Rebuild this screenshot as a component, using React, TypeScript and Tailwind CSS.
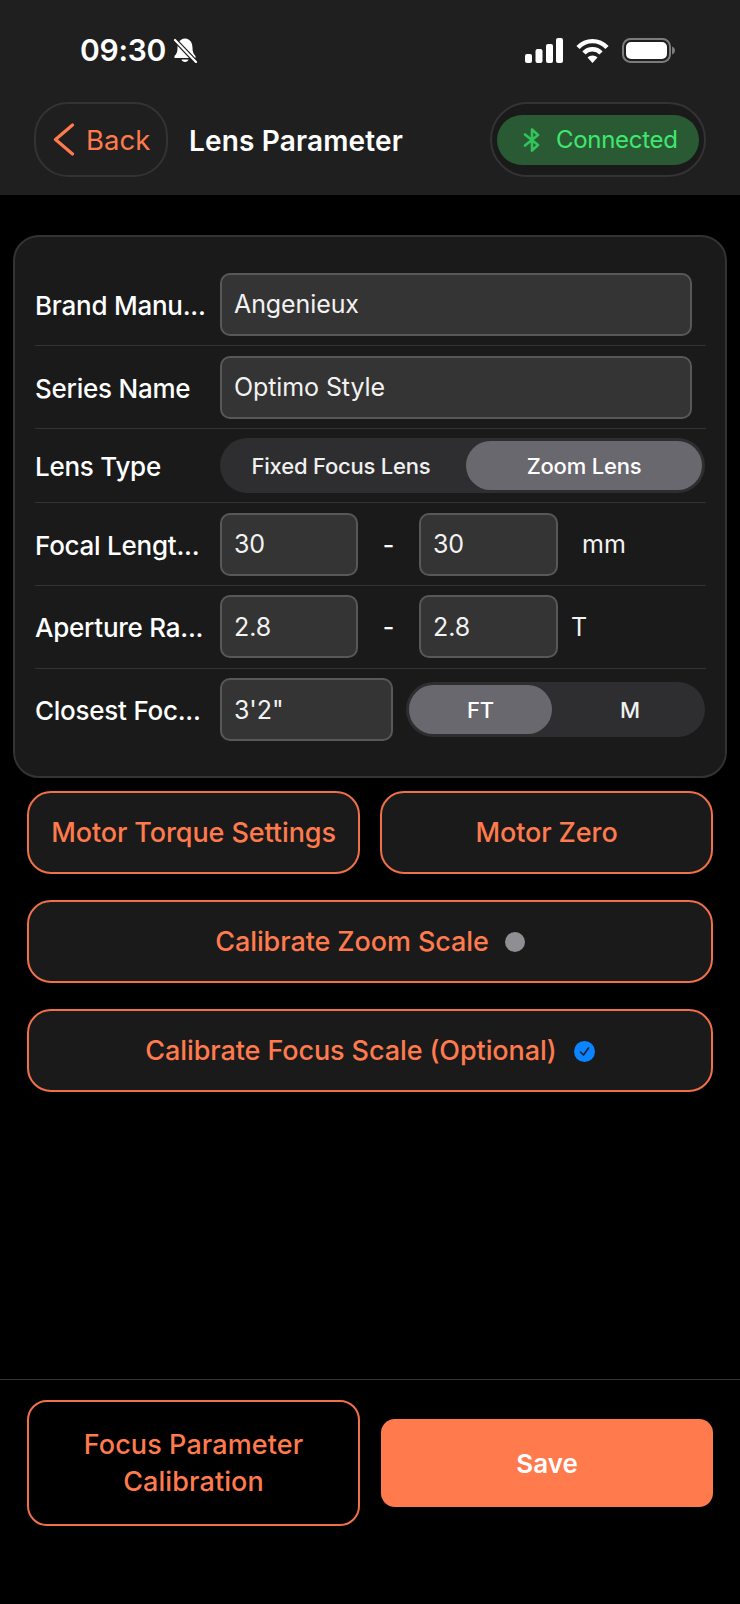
const font = { fontFamily: "Inter, 'Liberation Sans', sans-serif" };

function Field({ value, className }: { value: string; className: string }) {
  return (
    <div className={`flex h-[63px] items-center rounded-[10px] border-2 border-[#585858] bg-[#343434] pl-[12px] pt-[2px] text-[25px] tracking-[-0.1px] text-[#f2f2f2] ${className}`}>
      {value}
    </div>
  );
}

function Row({ label, children, last, lift = "" }: { label: string; children: React.ReactNode; last?: boolean; lift?: string }) {
  return (
    <div className={`flex h-[83px] items-center ${lift} ${last ? "" : "border-b border-[#333333]"}`}>
      <div className="w-[185px] shrink-0 pt-[2px] text-[26px] font-medium tracking-[-0.25px] text-white">{label}</div>
      {children}
    </div>
  );
}

function Segment({ options, active, className, thumb, rest }: { options: string[]; active: number; className: string; thumb: string; rest: string }) {
  return (
    <div className={`flex h-[55px] items-center rounded-full bg-[#2e2e30] p-[3px] ${className}`}>
      {options.map((o, i) =>
        i === active ? (
          <div key={o} className={`flex h-[49px] items-center justify-center rounded-full bg-[#69686e] pt-[1px] text-[22px] font-medium tracking-[-0.2px] text-white ${thumb}`}>
            {o}
          </div>
        ) : (
          <div key={o} className={`flex h-[49px] flex-1 items-center justify-center pt-[1px] text-[22px] font-medium tracking-[-0.2px] text-[#f0f0f0] ${rest}`}>
            {o}
          </div>
        )
      )}
    </div>
  );
}

function OutlineButton({ children, className }: { children: React.ReactNode; className: string }) {
  return (
    <div className={`flex items-center justify-center rounded-[24px] border-2 border-[#f0704a] bg-[#1a1a1a] pt-[1px] text-[27px] font-medium tracking-[-0.1px] text-[#ff7a4d] ${className}`}>
      {children}
    </div>
  );
}

function StatusIcons() {
  return (
    <div className="flex items-center">
      <svg width="38" height="25" viewBox="0 0 38 25" fill="white">
        <rect x="0" y="16" width="7" height="9" rx="2" />
        <rect x="10.5" y="11" width="7" height="14" rx="2" />
        <rect x="21" y="6" width="7" height="19" rx="2" />
        <rect x="31" y="0" width="7" height="25" rx="2" />
      </svg>
      <svg className="ml-[13px]" width="33" height="25" viewBox="0 0 33 25" fill="none" stroke="white" strokeWidth="4.4">
        <path d="M2 9.5 C10 1 23 1 31 9.5" />
        <path d="M8 15 C12.5 10 20.5 10 25 15" />
        <path d="M16.5 25 L11.5 19.5 C14 16.8 19 16.8 21.5 19.5 Z" fill="white" stroke="none" />
      </svg>
      <svg className="ml-[13px]" width="53" height="25" viewBox="0 0 53 25" fill="none">
        <rect x="1" y="1" width="47" height="23" rx="7.5" stroke="#7c7c7c" strokeWidth="2" />
        <rect x="4" y="4" width="41" height="17" rx="5" fill="white" />
        <path d="M50 8.5 C52 9.2 53 10.5 53 12.5 C53 14.5 52 15.8 50 16.5 Z" fill="#7c7c7c" />
      </svg>
    </div>
  );
}

export default function App() {
  return (
    <div className="flex h-[1604px] w-[740px] flex-col overflow-hidden bg-black" style={font}>
      <div className="h-[195px] shrink-0 bg-[#1f1f1f] px-[34px]">
        <div className="flex h-[100px] items-center justify-between pl-[46px]">
          <div className="flex items-center">
            <span className="text-[30px] font-semibold leading-none tracking-[-0.3px] text-white">09:30</span>
            <svg className="ml-[7px]" width="25" height="25" viewBox="0 0 25 25">
              <path d="M12 0.5 C6.5 1 4.5 5 4.5 10 C4.5 14 3.5 16 1.5 18 L1.5 20 L22.5 20 L22.5 18 C20.5 16 19.5 14 19.5 10 C19.5 5 17.5 1 12 0.5 Z" fill="white" />
              <path d="M8.5 21.5 C9 24.8 15 24.8 15.5 21.5 Z" fill="white" />
              <path d="M2 2 L23 24" stroke="#1f1f1f" strokeWidth="4.6" />
              <path d="M2 2 L23 24" stroke="white" strokeWidth="2.2" strokeLinecap="round" />
            </svg>
          </div>
          <div className="mr-[31px]">
            <StatusIcons />
          </div>
        </div>
        <div className="mt-[2px] flex h-[75px] items-center">
          <div className="flex h-[75px] w-[134px] items-center rounded-[34px] border-2 border-[#333333] pl-[17px]">
            <svg width="22" height="33" viewBox="0 0 22 33" fill="none" stroke="#ff7a4d" strokeWidth="3.2" strokeLinecap="round" strokeLinejoin="round">
              <path d="M19.5 2 L2.5 16.5 L19.5 31" />
            </svg>
            <span className="ml-[11px] pt-[2px] text-[27.5px] text-[#ff7a4d]">Back</span>
          </div>
          <div className="ml-[21px] pt-[2px] text-[28px] font-semibold tracking-[0.15px] text-white">Lens Parameter</div>
          <div className="ml-auto flex h-[75px] w-[216px] items-center justify-center rounded-full border-2 border-[#333333] bg-[#1a1a1a]">
            <div className="flex h-[50px] w-[202px] items-center rounded-full bg-[#2a5a34] pl-[25px]">
              <svg width="20" height="24" viewBox="0 0 20 24" fill="none" stroke="#32c45a" strokeWidth="2.6" strokeLinecap="round" strokeLinejoin="round">
                <path d="M3 6.5 L16 17 L10 22.5 L10 1.5 L16 7 L3 17.5" />
              </svg>
              <span className="ml-[14px] pt-[1px] text-[24px] tracking-[-0.3px] text-[#3fe86c]">Connected</span>
            </div>
          </div>
        </div>
      </div>

      <div className="mx-[13px] mt-[40px] rounded-[26px] border-2 border-[#333333] bg-[#1a1a1a] pb-[24px] pl-[20px] pr-[19px] pt-[26px]">
        <Row label="Brand Manu...">
          <Field value="Angenieux" className="w-[472px]" />
        </Row>
        <Row label="Series Name">
          <Field value="Optimo Style" className="w-[472px]" />
        </Row>
        <div className="flex h-[74px] items-center border-b border-[#333333]">
          <div className="w-[185px] shrink-0 pt-[1px] text-[26px] font-medium tracking-[-0.25px] text-white">Lens Type</div>
          <Segment options={["Fixed Focus Lens", "Zoom Lens"]} active={1} className="w-[485px]" thumb="w-[236px]" rest="pr-[7px]" />
        </div>
        <Row label="Focal Lengt...">
          <Field value="30" className="w-[138px]" />
          <span className="w-[61px] pt-[3px] text-center text-[25px] font-medium text-white">-</span>
          <Field value="30" className="w-[139px]" />
          <span className="ml-[24px] pt-[2px] text-[25px] text-[#f2f2f2]">mm</span>
        </Row>
        <Row label="Aperture Ra..." lift="pb-[1px]">
          <Field value="2.8" className="w-[138px]" />
          <span className="w-[61px] pt-[3px] text-center text-[25px] font-medium text-white">-</span>
          <Field value="2.8" className="w-[139px]" />
          <span className="ml-[13px] pt-[2px] text-[25px] text-[#f2f2f2]">T</span>
        </Row>
        <Row label="Closest Foc..." last lift="pb-[2px]">
          <Field value={`3'2"`} className="w-[173px]" />
          <Segment options={["FT", "M"]} active={0} className="ml-[13px] w-[299px]" thumb="w-[143px]" rest="pl-[6px]" />
        </Row>
      </div>

      <div className="mx-[27px] mt-[13px] flex flex-col gap-[26px]">
        <div className="flex gap-[20px]">
          <OutlineButton className="h-[83px] w-[333px]">Motor Torque Settings</OutlineButton>
          <OutlineButton className="h-[83px] w-[333px]">Motor Zero</OutlineButton>
        </div>
        <OutlineButton className="h-[83px] w-[686px]">
          Calibrate Zoom Scale
          <span className="ml-[16px] h-[20px] w-[20px] rounded-full bg-[#8e8e93]" />
        </OutlineButton>
        <OutlineButton className="h-[83px] w-[686px]">
          Calibrate Focus Scale (Optional)
          <svg className="ml-[17px]" width="21" height="21" viewBox="0 0 21 21">
            <circle cx="10.5" cy="10.5" r="10.5" fill="#0a84ff" />
            <path d="M6.5 11 L9.5 14 L14.5 7" fill="none" stroke="#10202e" strokeWidth="1.6" strokeLinecap="round" strokeLinejoin="round" />
          </svg>
        </OutlineButton>
      </div>

      <div className="mt-auto h-[225px] border-t border-[#333333] px-[27px]">
        <div className="flex h-[166px] items-center">
          <div className="flex h-[126px] w-[333px] items-center justify-center rounded-[20px] border-2 border-[#f0704a] text-center text-[27px] font-medium leading-[37px] tracking-[0.1px] text-[#ff7a4d]">
            Focus Parameter
            <br />
            Calibration
          </div>
          <div className="ml-[21px] flex h-[88px] w-[332px] items-center justify-center rounded-[14px] bg-[#ff7a4d] text-[26px] font-semibold text-white">
            Save
          </div>
        </div>
      </div>
    </div>
  );
}
